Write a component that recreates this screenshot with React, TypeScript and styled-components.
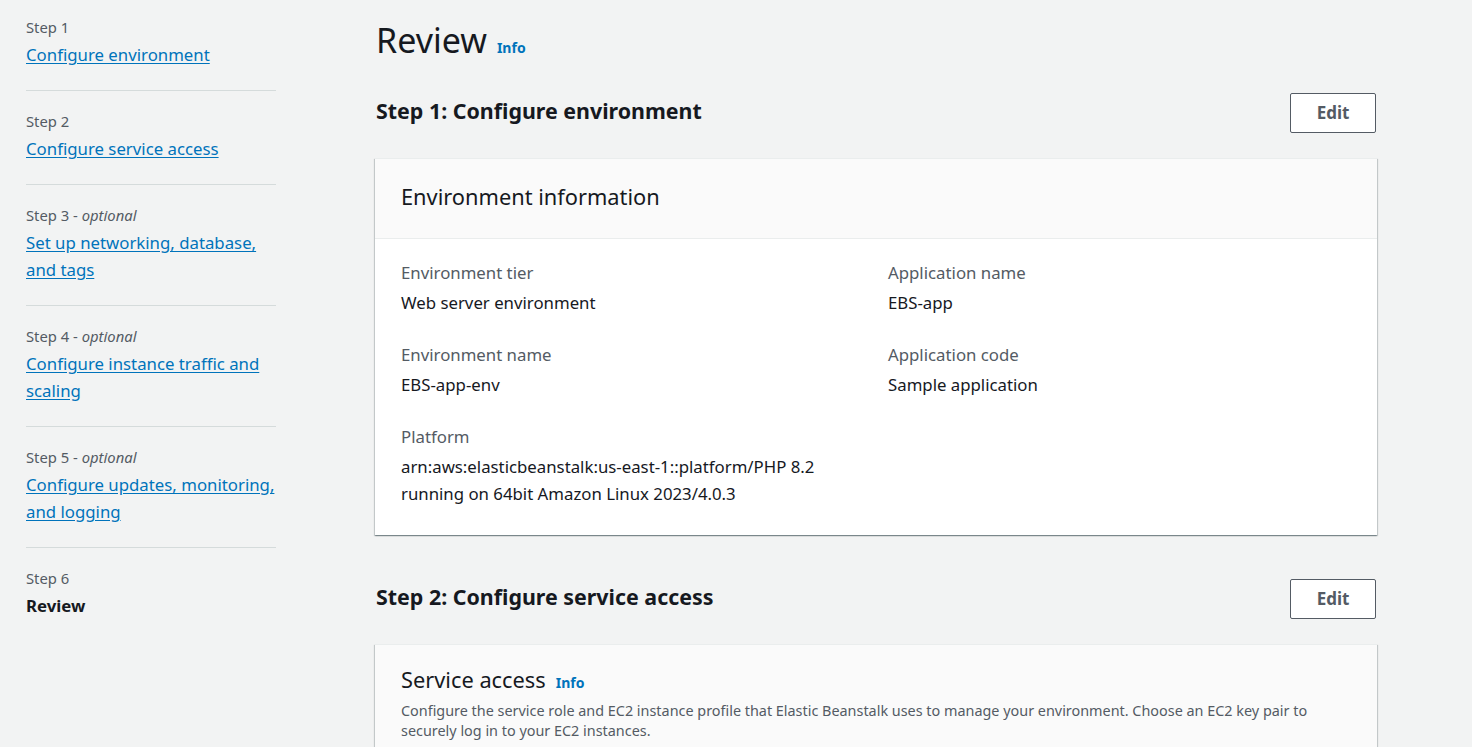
import React from "react";
import styled, { createGlobalStyle } from "styled-components";

const GlobalStyle = createGlobalStyle`
  html, body {
    margin: 0;
    padding: 0;
    background: #f2f3f3;
    font-family: "Noto Sans", "Open Sans", Arial, sans-serif;
    color: #16191f;
    overflow: hidden;
  }
  * { box-sizing: border-box; }
`;

const Page = styled.div`
  display: flex;
  align-items: flex-start;
  height: 747px;
  overflow: hidden;
`;

const Sidebar = styled.nav`
  width: 250px;
  margin-left: 26px;
  padding-top: 17px;
  flex-shrink: 0;
`;

const StepItem = styled.div<{ $first?: boolean; $last?: boolean }>`
  padding: ${(p) => (p.$first ? "0" : "20px")} 0 ${(p) => (p.$last ? "0" : "22px")};
  border-bottom: ${(p) => (p.$last ? "none" : "1px solid #d5dbdb")};
`;

const StepLabel = styled.div`
  font-size: 14.8px;
  line-height: 20px;
  color: #545b64;
  margin-bottom: 4px;
  em {
    font-style: italic;
  }
`;

const StepLink = styled.a<{ $current?: boolean }>`
  display: block;
  font-size: 16.8px;
  line-height: 27px;
  color: ${(p) => (p.$current ? "#16191f" : "#0073bb")};
  font-weight: ${(p) => (p.$current ? 700 : 400)};
  text-decoration: ${(p) => (p.$current ? "none" : "underline")};
  text-underline-offset: 2px;
  cursor: pointer;
`;

const Main = styled.main`
  width: 1002px;
  margin-left: 99px;
  padding-top: 20px;
  flex-shrink: 0;
`;

const PageTitle = styled.h1`
  margin: 0;
  font-size: 34px;
  line-height: 40px;
  font-weight: 400;
  display: flex;
  align-items: baseline;
  gap: 10px;
  padding-left: 1px;
`;

const InfoLink = styled.a`
  font-size: 14px;
  font-weight: 700;
  color: #0073bb;
  text-decoration: none;
  cursor: pointer;
`;

const Section = styled.section<{ $first?: boolean }>`
  margin-top: ${(p) => (p.$first ? "25px" : "44px")};
`;

const SectionHeader = styled.div`
  display: flex;
  align-items: center;
  justify-content: space-between;
  height: 40px;
  padding-left: 1px;
  margin-bottom: 25px;
`;

const SectionTitle = styled.h2`
  margin: 0;
  font-size: 21.4px;
  line-height: 28px;
  font-weight: 700;
  position: relative;
  top: -2px;
`;

const EditButton = styled.button`
  width: 86px;
  height: 40px;
  padding: 0 0 2px;
  background: #ffffff;
  border: 1px solid #545b64;
  border-radius: 2px;
  color: #545b64;
  font-family: inherit;
  font-size: 17px;
  font-weight: 700;
  cursor: pointer;
  margin-right: 1px;
`;

const Card = styled.div`
  background: #ffffff;
  border-top: 1px solid #eaeded;
  box-shadow: 0 1px 1px 0 rgba(0, 28, 36, 0.3), 1px 1px 1px 0 rgba(0, 28, 36, 0.15),
    -1px 1px 1px 0 rgba(0, 28, 36, 0.15);
`;

const CardHeader = styled.div<{ $tall?: boolean }>`
  background: #fafafa;
  padding: ${(p) => (p.$tall ? "21px 26px 26px" : "24px 26px 28px")};
  border-bottom: 1px solid #eaeded;
`;

const CardTitle = styled.h3`
  margin: 0;
  font-size: 21.8px;
  line-height: 27px;
  font-weight: 400;
  display: flex;
  align-items: baseline;
  gap: 10px;
`;

const CardDescription = styled.p`
  margin: 5px 0 0;
  font-size: 14.4px;
  line-height: 20px;
  color: #545b64;
`;

const CardBody = styled.div`
  padding: 20px 26px 28px;
  display: grid;
  grid-template-columns: 1fr 1fr;
  column-gap: 24px;
`;

const Column = styled.div`
  display: flex;
  flex-direction: column;
  gap: 25px;
`;

const Field = styled.div`
  display: flex;
  flex-direction: column;
  gap: 3px;
`;

const FieldLabel = styled.div`
  font-size: 16.8px;
  line-height: 27px;
  color: #545b64;
`;

const FieldValue = styled.div`
  font-size: 16.8px;
  line-height: 27px;
  color: #16191f;
`;

const steps = [
  { n: "Step 1", title: "Configure environment" },
  { n: "Step 2", title: "Configure service access" },
  { n: "Step 3", optional: true, title: "Set up networking, database, and tags" },
  { n: "Step 4", optional: true, title: "Configure instance traffic and scaling" },
  { n: "Step 5", optional: true, title: "Configure updates, monitoring, and logging" },
  { n: "Step 6", title: "Review", current: true },
];

export default function App() {
  return (
    <>
      <GlobalStyle />
      <Page>
        <Sidebar>
          {steps.map((s, i) => (
            <StepItem key={s.n} $first={i === 0} $last={i === steps.length - 1}>
              <StepLabel>
                {s.n}
                {s.optional && (
                  <>
                    {" - "}
                    <em>optional</em>
                  </>
                )}
              </StepLabel>
              <StepLink $current={s.current}>{s.title}</StepLink>
            </StepItem>
          ))}
        </Sidebar>
        <Main>
          <PageTitle>
            Review <InfoLink>Info</InfoLink>
          </PageTitle>

          <Section $first>
            <SectionHeader>
              <SectionTitle>Step 1: Configure environment</SectionTitle>
              <EditButton>Edit</EditButton>
            </SectionHeader>
            <Card>
              <CardHeader>
                <CardTitle>Environment information</CardTitle>
              </CardHeader>
              <CardBody>
                <Column>
                  <Field>
                    <FieldLabel>Environment tier</FieldLabel>
                    <FieldValue>Web server environment</FieldValue>
                  </Field>
                  <Field>
                    <FieldLabel>Environment name</FieldLabel>
                    <FieldValue>EBS-app-env</FieldValue>
                  </Field>
                  <Field>
                    <FieldLabel>Platform</FieldLabel>
                    <FieldValue>
                      arn:aws:elasticbeanstalk:us-east-1::platform/PHP 8.2
                      <br />
                      running on 64bit Amazon Linux 2023/4.0.3
                    </FieldValue>
                  </Field>
                </Column>
                <Column>
                  <Field>
                    <FieldLabel>Application name</FieldLabel>
                    <FieldValue>EBS-app</FieldValue>
                  </Field>
                  <Field>
                    <FieldLabel>Application code</FieldLabel>
                    <FieldValue>Sample application</FieldValue>
                  </Field>
                </Column>
              </CardBody>
            </Card>
          </Section>

          <Section>
            <SectionHeader>
              <SectionTitle>Step 2: Configure service access</SectionTitle>
              <EditButton>Edit</EditButton>
            </SectionHeader>
            <Card>
              <CardHeader $tall>
                <CardTitle>
                  Service access <InfoLink>Info</InfoLink>
                </CardTitle>
                <CardDescription>
                  Configure the service role and EC2 instance profile that Elastic Beanstalk uses to manage your
                  environment. Choose an EC2 key pair to securely log in to your EC2 instances.
                </CardDescription>
              </CardHeader>
            </Card>
          </Section>
        </Main>
      </Page>
    </>
  );
}
